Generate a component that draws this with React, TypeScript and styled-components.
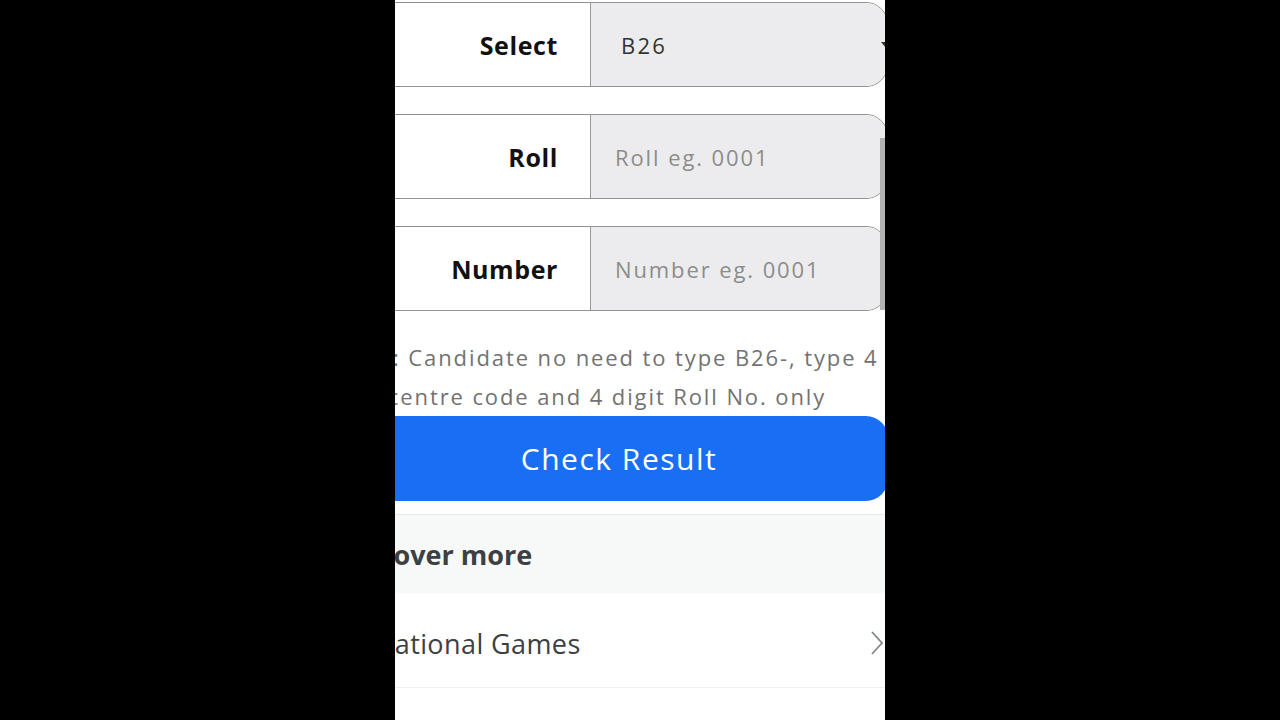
import React from 'react';
import styled, { createGlobalStyle } from 'styled-components';

const formFont = `"Open Sans", "Noto Sans", sans-serif`;
const googleFont = `"Open Sans", Roboto, sans-serif`;
const rowBorder = '#929292';
const fieldBg = '#ececee';

const GlobalStyle = createGlobalStyle`
    html, body {
        margin: 0;
        padding: 0;
        background: #000;
    }
    #root {
        height: 720px;
    }
`;

const fields = [
    { label: 'Select', value: 'B26', select: true },
    { label: 'Roll', placeholder: 'Roll eg. 0001' },
    { label: 'Number', placeholder: 'Number eg. 0001' },
];

const App = () => {
    return (
        <>
            <GlobalStyle />
            <Stage>
                <Screen>
                    <Page>
                        <Form>
                            {fields.map((f) => (
                                <Row key={f.label}>
                                    <Label>{f.label}</Label>
                                    <Field $select={!!f.select}>
                                        {f.select ? (
                                            <>
                                                <Value>{f.value}</Value>
                                                <Caret viewBox="0 0 10 6">
                                                    <path d="M0 0 L5 6 L10 0 Z" fill="#333" />
                                                </Caret>
                                            </>
                                        ) : (
                                            <Input placeholder={f.placeholder} />
                                        )}
                                    </Field>
                                </Row>
                            ))}
                            <Hint>
                                Note: Candidate no need to type B26-, type 4<br />
                                centre code and 4 digit Roll No. only
                            </Hint>
                            <SubmitButton>Check Result</SubmitButton>
                        </Form>
                        <Discover>
                            <DiscoverTitle>Discover more</DiscoverTitle>
                            <DiscoverItem>
                                <span>National Games</span>
                                <Chevron viewBox="0 0 14 26">
                                    <path d="M2 2 L12 13 L2 24" fill="none" stroke="#80868b" strokeWidth="1.8" />
                                </Chevron>
                            </DiscoverItem>
                        </Discover>
                    </Page>
                    <ScrollThumb />
                </Screen>
            </Stage>
        </>
    );
};

const Stage = styled.div`
    width: 1280px;
    height: 720px;
    display: flex;
    justify-content: center;
    background: #000;
`;

const Screen = styled.div`
    position: relative;
    width: 490px;
    height: 720px;
    background: #fff;
    overflow: hidden;
`;

const Page = styled.div`
    margin-left: -100px;
    width: 593px;
`;

const Form = styled.div`
    padding-top: 2px;
    display: flex;
    flex-direction: column;
`;

const Row = styled.div`
    display: flex;
    height: 85px;
    box-sizing: border-box;
    border: 1.5px solid ${rowBorder};
    border-radius: 22px;
    overflow: hidden;
    margin-bottom: 27px;
    &:nth-child(3) {
        margin-bottom: 0;
    }
`;

const Label = styled.div`
    width: 294px;
    box-sizing: border-box;
    padding-right: 32px;
    display: flex;
    align-items: center;
    justify-content: flex-end;
    font-family: ${formFont};
    font-weight: 700;
    font-size: 25px;
    letter-spacing: 0.6px;
    color: #111;
    background: #fff;
`;

const Field = styled.div<{ $select: boolean }>`
    flex: 1;
    display: flex;
    align-items: center;
    justify-content: space-between;
    background: ${fieldBg};
    border-left: 1.5px solid #9a9a9a;
    padding-left: ${(p) => (p.$select ? '30px' : '24px')};
    padding-right: 0;
`;

const Value = styled.span`
    font-family: ${formFont};
    font-size: 22px;
    letter-spacing: 2.2px;
    color: #333;
`;

const Caret = styled.svg`
    width: 10px;
    height: 6px;
    margin-right: -4px;
`;

const Input = styled.input`
    border: none;
    outline: none;
    background: transparent;
    width: 100%;
    padding: 0;
    font-family: ${formFont};
    font-size: 22px;
    letter-spacing: 1.9px;
    color: #333;
    &::placeholder {
        color: #8c8c8c;
    }
`;

const Hint = styled.div`
    margin-top: 27px;
    padding-left: 31px;
    text-align: center;
    font-family: ${formFont};
    font-size: 22px;
    letter-spacing: 1.9px;
    line-height: 39px;
    color: #727272;
    white-space: nowrap;
`;

const SubmitButton = styled.button`
    height: 85px;
    border: none;
    border-radius: 22px;
    background: #1a6ef4;
    color: #fff;
    padding: 0 0 0 55px;
    font-family: ${formFont};
    font-size: 30px;
    letter-spacing: 1.5px;
    cursor: pointer;
`;

const Discover = styled.div`
    margin-top: 13px;
    border-top: 1.5px solid #e6e6e6;
`;

const DiscoverTitle = styled.div`
    height: 78px;
    display: flex;
    align-items: center;
    padding-left: 43px;
    background: #f7f8f8;
    font-family: ${googleFont};
    font-weight: 700;
    font-size: 27px;
    color: #3c4043;
`;

const DiscoverItem = styled.div`
    height: 95px;
    box-sizing: border-box;
    display: flex;
    align-items: center;
    justify-content: space-between;
    padding: 6px 4px 0 79px;
    border-bottom: 1.5px solid #f0f0f0;
    font-family: ${googleFont};
    font-size: 27px;
    letter-spacing: 0.4px;
    color: #3c4043;
`;

const Chevron = styled.svg`
    width: 14px;
    height: 26px;
`;

const ScrollThumb = styled.div`
    position: absolute;
    right: 0;
    top: 138px;
    width: 5px;
    height: 172px;
    background: #b2b2b2;
`;

export default App;
